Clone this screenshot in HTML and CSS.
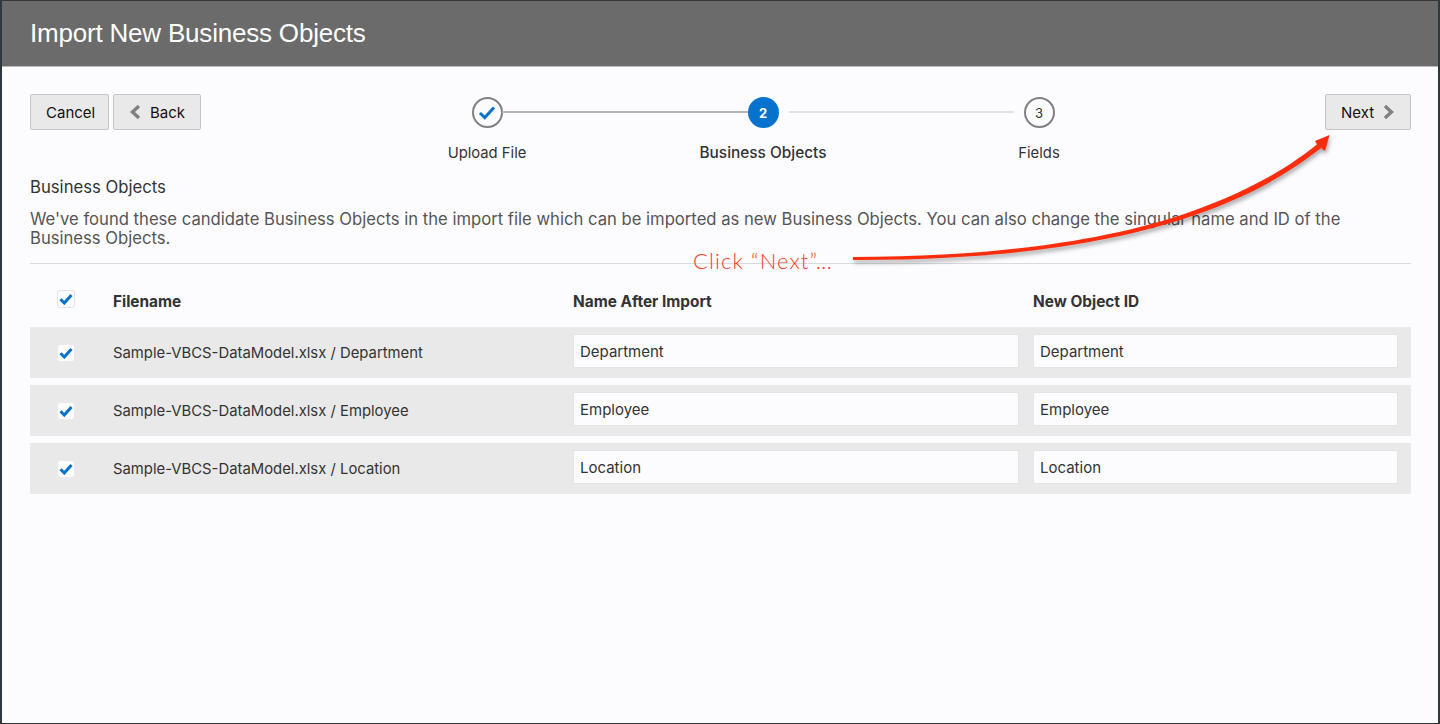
FILE: index.html
```html
<!DOCTYPE html>
<html lang="en">
<head>
    <meta charset="UTF-8">
    <title>Import New Business Objects</title>
    <link rel="stylesheet" href="styles.css">
</head>
<body>
    <div class="dialog">
        <h1 class="dialog-title">Import New Business Objects</h1>
        <div class="dialog-body">
            <div class="toolbar">
                <div class="btn-group">
                    <button class="btn btn-cancel">Cancel</button>
                    <button class="btn btn-back">
                        <svg class="chevron" width="12" height="16" viewBox="0 0 12 16"><path d="M10 2 L3.5 8 L10 14"/></svg>
                        Back
                    </button>
                </div>
                <div class="train">
                    <div class="step">
                        <div class="step-head">
                            <span class="dot dot-done">
                                <svg width="18" height="15" viewBox="0 0 18 15"><path d="M2 8 L6.8 12.5 L16 2.5"/></svg>
                            </span>
                            <span class="line line-done line-right"></span>
                        </div>
                        <div class="step-label">Upload File</div>
                    </div>
                    <div class="step">
                        <div class="step-head">
                            <span class="line line-done line-left"></span>
                            <span class="dot dot-current">2</span>
                            <span class="line line-right line-next"></span>
                        </div>
                        <div class="step-label step-label-current">Business Objects</div>
                    </div>
                    <div class="step">
                        <div class="step-head">
                            <span class="line line-left line-prev"></span>
                            <span class="dot">3</span>
                        </div>
                        <div class="step-label">Fields</div>
                    </div>
                </div>
                <button class="btn btn-next">
                    Next
                    <svg class="chevron" width="12" height="16" viewBox="0 0 12 16"><path d="M2 2 L8.5 8 L2 14"/></svg>
                </button>
            </div>

            <h2 class="section-title">Business Objects</h2>
            <p class="section-text">We've found these candidate Business Objects in the import file which can be imported as new Business Objects. You can also change the singular name and ID of the Business Objects.</p>
            <hr class="divider">

            <div class="table-row table-head">
                <span class="check check-head"><svg width="14" height="12" viewBox="0 0 14 12"><path d="M1.5 6.2 L5.3 10 L12.5 2"/></svg></span>
                <span>Filename</span>
                <span>Name After Import</span>
                <span>New Object ID</span>
            </div>
            <div class="table-row">
                <span class="check"><svg width="14" height="12" viewBox="0 0 14 12"><path d="M1.5 6.2 L5.3 10 L12.5 2"/></svg></span>
                <span>Sample-VBCS-DataModel.xlsx / Department</span>
                <input class="field field-name" value="Department">
                <input class="field field-id" value="Department">
            </div>
            <div class="table-row">
                <span class="check"><svg width="14" height="12" viewBox="0 0 14 12"><path d="M1.5 6.2 L5.3 10 L12.5 2"/></svg></span>
                <span>Sample-VBCS-DataModel.xlsx / Employee</span>
                <input class="field field-name" value="Employee">
                <input class="field field-id" value="Employee">
            </div>
            <div class="table-row">
                <span class="check"><svg width="14" height="12" viewBox="0 0 14 12"><path d="M1.5 6.2 L5.3 10 L12.5 2"/></svg></span>
                <span>Sample-VBCS-DataModel.xlsx / Location</span>
                <input class="field field-name" value="Location">
                <input class="field field-id" value="Location">
            </div>
        </div>

        <!-- annotation over the dialog -->
        <div class="callout">Click “Next”…</div>
        <svg class="callout-arrow" width="1440" height="724" viewBox="0 0 1440 724">
            <path d="M853 257 C1000 256.5 1110 240 1190 212 C1245 193 1285 170 1317 144.5 L1315 141 L1329.5 135 L1325 151 L1321 148 C1288 174 1248 197 1192 216 C1110 244 1000 260.5 853 260 Z"/>
        </svg>
    </div>
</body>
</html>
```

FILE: styles.css
```css
html, body {
    margin: 0;
    height: 100%;
    overflow: hidden;
}

body {
    background-color: #33363a;
    font-family: Inter, "Liberation Sans", Arial, sans-serif;
    color: #333;
}

.dialog {
    position: relative;
    box-sizing: border-box;
    height: 722px;
    margin: 1px 2px 0 2px;
    background-color: #fcfcff;
}

.dialog-title {
    box-sizing: border-box;
    height: 66px;
    margin: 0;
    padding: 0 0 0 28px;
    background-color: #6b6b6b;
    border-bottom: 1px solid #bbb;
    color: #fff;
    font-family: "Liberation Sans", Arial, sans-serif;
    font-size: 26px;
    font-weight: 400;
    line-height: 65px;
    letter-spacing: -0.2px;
}

.dialog-body {
    padding: 27px 27px 0 28px;
}

.toolbar {
    display: flex;
    align-items: flex-start;
}

.btn-group {
    display: flex;
    gap: 4px;
}

.btn {
    display: flex;
    align-items: center;
    box-sizing: border-box;
    height: 36px;
    padding: 0 15px;
    background-color: #e9e9e9;
    border: 1px solid #c4c4c4;
    border-radius: 2px;
    color: #111;
    font-family: inherit;
    font-size: 15px;
}

.btn-cancel {
    width: 79px;
}

.btn-back {
    width: 88px;
    gap: 9px;
}

.btn-next {
    width: 86px;
    gap: 9px;
    margin-left: auto;
}

.chevron path {
    fill: none;
    stroke: #808080;
    stroke-width: 3.4;
}

.train {
    display: flex;
    width: 828px;
    margin-left: 148px;
}

.step {
    width: 276px;
    text-align: center;
}

.step-head {
    position: relative;
    display: flex;
    justify-content: center;
    height: 31px;
    margin-top: 3px;
}

.dot {
    display: flex;
    align-items: center;
    justify-content: center;
    box-sizing: border-box;
    width: 31px;
    height: 31px;
    background-color: #fcfcff;
    border: 2px solid #808080;
    border-radius: 50%;
    font-size: 13px;
}

.dot-done path {
    fill: none;
    stroke: #0572ce;
    stroke-width: 3;
}

.dot-current {
    background-color: #0572ce;
    border: none;
    color: #fff;
    font-weight: 700;
}

.line {
    position: absolute;
    top: 14px;
    height: 2px;
}

.line-done {
    background-color: #b5b5b5;
}

.line-right {
    left: 153px;
    right: 0;
}

.line-left {
    left: 0;
    right: 153px;
}

.line-next {
    left: 164px;
    background-color: #e2e2e2;
}

.line-prev {
    right: 163px;
    background-color: #e2e2e2;
}

.step-label {
    margin-top: 16px;
    font-size: 14.8px;
    line-height: 18px;
}

.step-label-current {
    font-weight: 500;
    font-size: 15.4px;
}

.section-title {
    margin: 15px 0 0;
    font-size: 16.7px;
    font-weight: 400;
    line-height: 20px;
}

.section-text {
    margin: 13px 0 0;
    color: #555;
    font-size: 16.65px;
    line-height: 19px;
}

.divider {
    margin: 15px 0 0;
    border: none;
    border-top: 1px solid #d6dbdf;
}

.table-row {
    display: grid;
    grid-template-columns: 83px 460px 446px 365px;
    align-items: center;
    height: 51px;
    margin-bottom: 7px;
    background-color: #e9e9e9;
    font-size: 14.85px;
}

.table-head {
    box-sizing: border-box;
    height: 63px;
    padding-top: 12px;
    margin-bottom: 0;
    background-color: transparent;
    font-size: 15.4px;
    font-weight: 700;
}

.table-head span:last-child {
    margin-left: 14px;
}

.check {
    display: flex;
    align-items: center;
    justify-content: center;
    box-sizing: border-box;
    width: 16px;
    height: 16px;
    margin-left: 28px;
    background-color: #fcfcff;
    border-radius: 2px;
}

.check-head {
    position: relative;
    top: -3px;
    box-shadow: 0 0 0 1px #e4e4e4;
}

.check path {
    fill: none;
    stroke: #0572ce;
    stroke-width: 3;
}

.field {
    align-self: start;
    box-sizing: border-box;
    height: 34px;
    margin-top: 7px;
    padding: 0 6px;
    background-color: #fcfcff;
    border: 1px solid #e4e4e4;
    border-radius: 2px;
    color: #333;
    font-family: inherit;
    font-size: 15px;
}

.field-name {
    width: 446px;
}

.field-id {
    width: 365px;
    margin-left: 14px;
}

.callout {
    position: absolute;
    left: 691px;
    top: 246px;
    color: #f53c20;
    font-family: Lato, sans-serif;
    font-size: 22px;
    font-weight: 300;
    line-height: 28px;
    letter-spacing: 1.1px;
}

.callout-arrow {
    position: absolute;
    left: -2px;
    top: -1px;
    pointer-events: none;
    filter: drop-shadow(1px 3px 2px rgba(0, 0, 0, 0.35));
}

.callout-arrow path {
    fill: #fb2d0c;
}
```
